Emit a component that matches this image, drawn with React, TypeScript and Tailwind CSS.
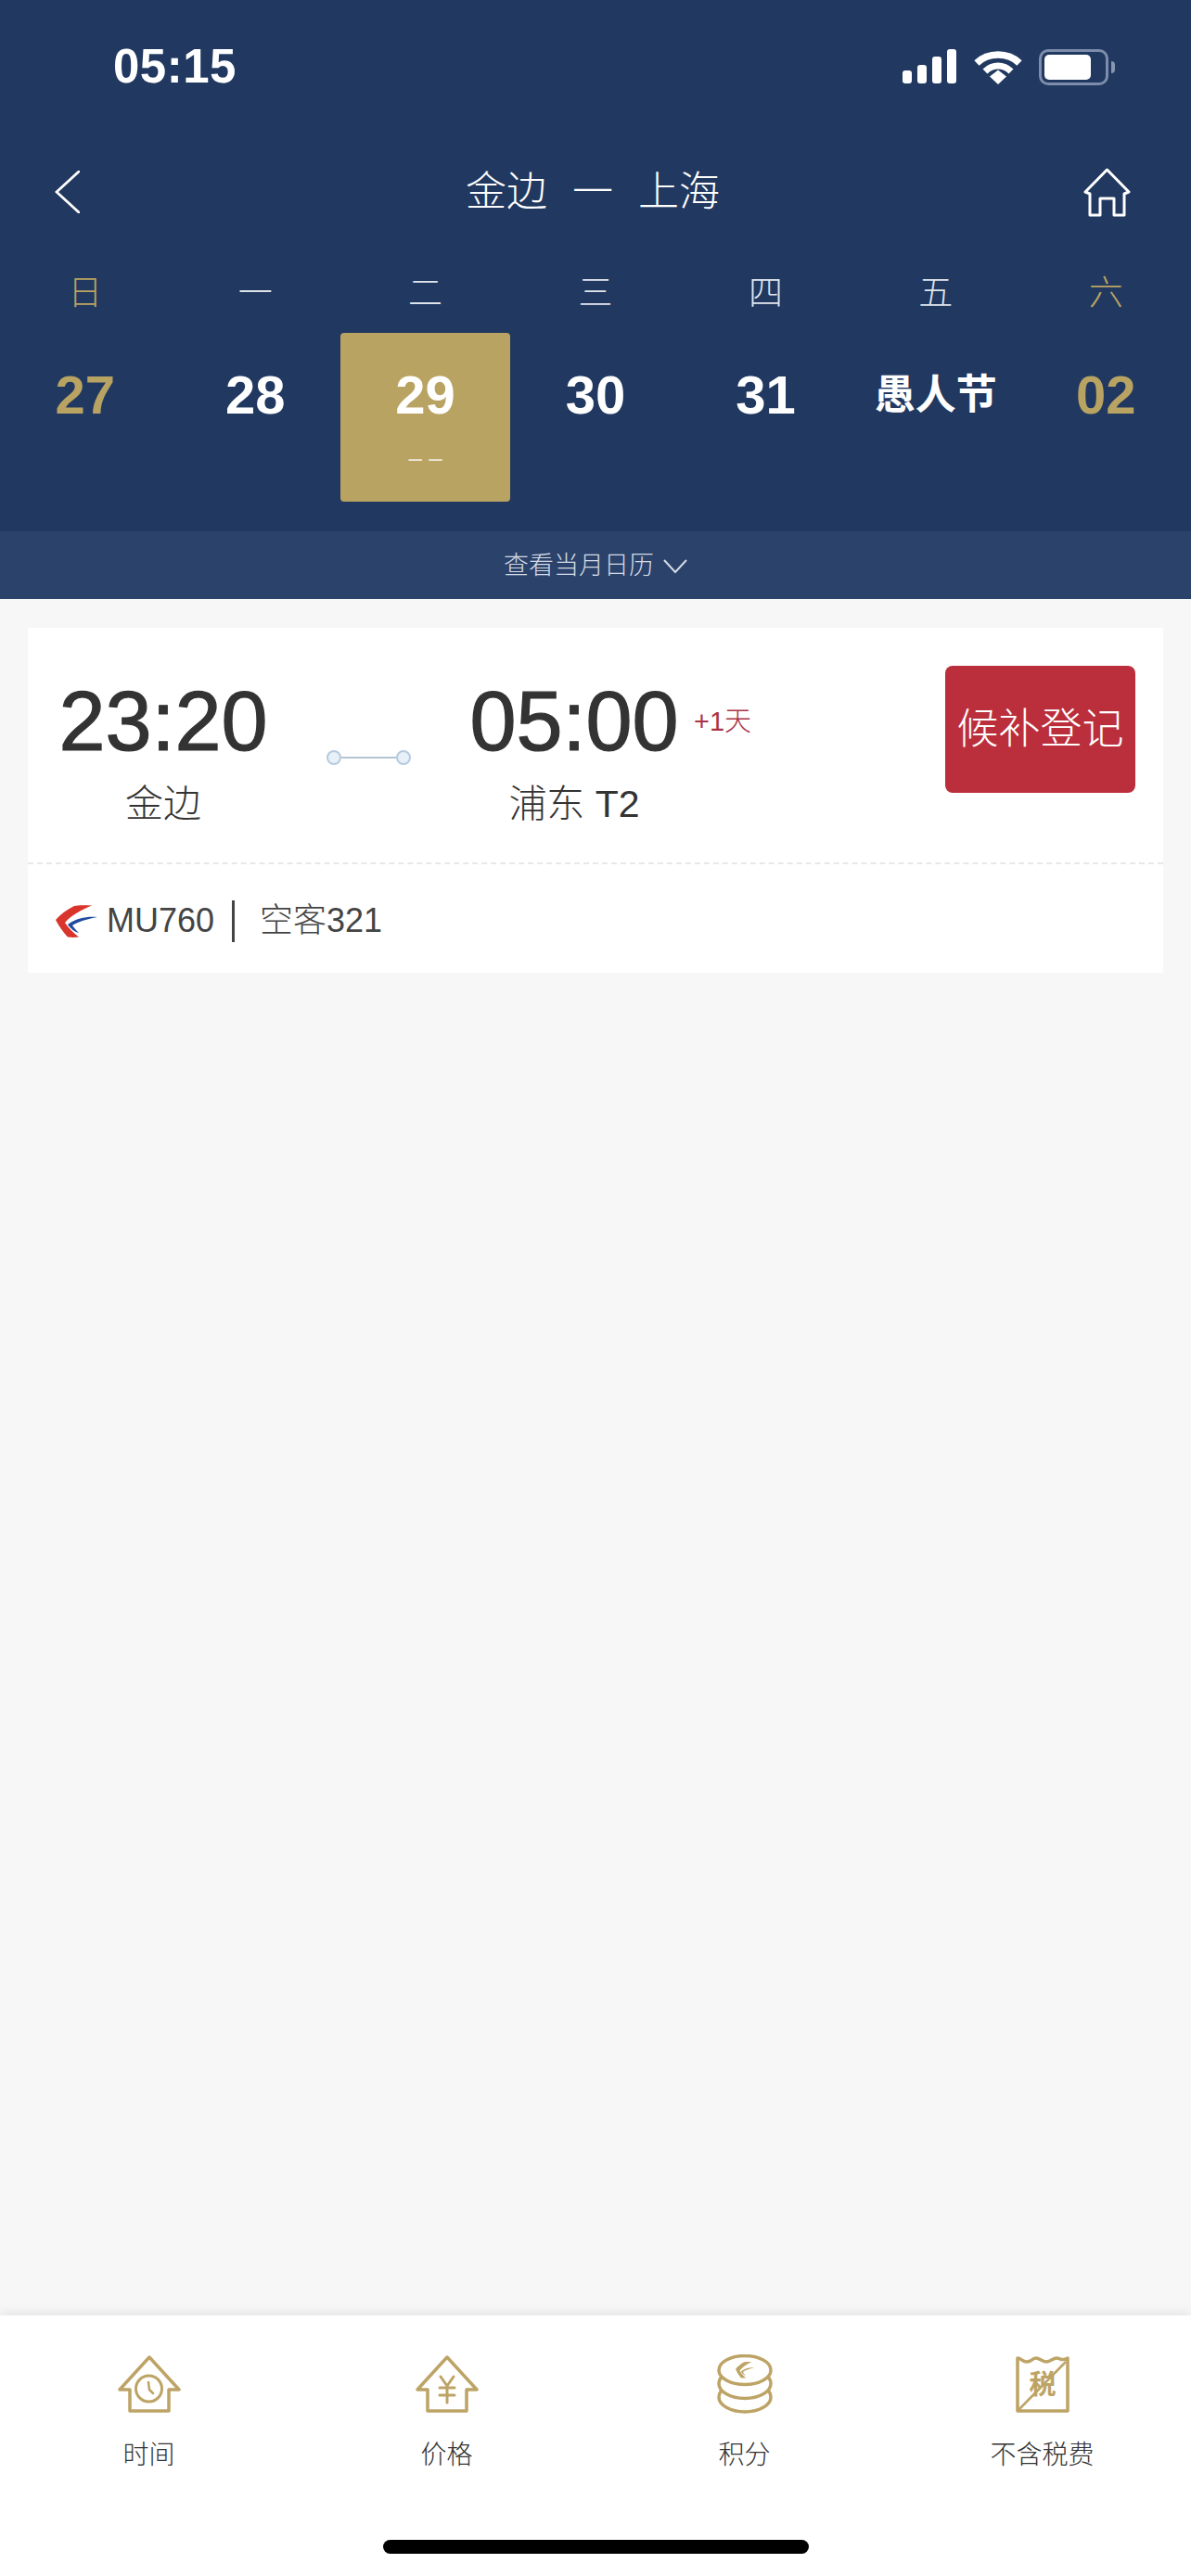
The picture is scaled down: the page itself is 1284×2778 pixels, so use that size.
const FONT = "[font-family:'Liberation_Sans','Noto_Sans_CJK_SC',sans-serif]";

const WEEK = [
  { label: "日", gold: true },
  { label: "一" },
  { label: "二" },
  { label: "三" },
  { label: "四" },
  { label: "五" },
  { label: "六", gold: true },
];

const DATES = [
  { text: "27", gold: true },
  { text: "28" },
  { text: "29", active: true },
  { text: "30" },
  { text: "31" },
  { text: "愚人节", holiday: true },
  { text: "02", gold: true },
];

function StatusIcons() {
  return (
    <div className="flex items-center">
      <svg width="60" height="38" viewBox="0 0 60 38" fill="#fff">
        <rect x="1" y="23" width="10" height="14" rx="3" />
        <rect x="17" y="17" width="10" height="20" rx="3" />
        <rect x="33" y="8" width="10" height="29" rx="3" />
        <rect x="49" y="0" width="10" height="37" rx="3" />
      </svg>
      <svg className="ml-[18px]" width="52" height="38" viewBox="0 0 52 38" fill="none" stroke="#fff">
        <path d="M3 15C15 3 37 3 49 15" strokeWidth="7.500" />
        <path d="M12 24C20 16 32 16 40 24" strokeWidth="7" />
        <path d="M17 29.500L26 22.500L35 29.500L26 38Z" fill="#fff" stroke="none" />
      </svg>
      <div className="ml-[18px] flex items-center">
        <div className="flex h-[39px] w-[75px] items-center rounded-[10px] border-[3px] border-[#7d8dab] pl-[3px]">
          <div className="h-[27px] w-[50px] rounded-[5px] bg-white" />
        </div>
        <div className="ml-[3px] h-[13px] w-[4px] rounded-r-full bg-[#8795b0]" />
      </div>
    </div>
  );
}

function HouseOutline({ children }: { children?: React.ReactNode }) {
  return (
    <svg width="68" height="62" viewBox="0 0 68 62" fill="none" stroke="#bda466" strokeWidth="3.500" strokeLinejoin="round" strokeLinecap="round">
      <path d="M34 2L66 37H55V60H13V37H2Z" />
      {children}
    </svg>
  );
}

function CoinsIcon() {
  return (
    <svg width="60" height="64" viewBox="0 0 60 64" fill="#fff" stroke="#bda466" strokeWidth="3.500">
      <ellipse cx="30" cy="46" rx="28" ry="16" />
      <ellipse cx="30" cy="31.500" rx="28" ry="16" />
      <ellipse cx="30" cy="17" rx="28" ry="15.500" />
      <g transform="translate(20 8) scale(0.44 0.5)" stroke="none" fill="#bda466">
        <path d="M39 0.500C31 0 24 0 20 1C12 5 5 10 0 16C3 22 8 29 13 34.500C17 35 21 35 25 34.500C19 30 14 25 10 19C17 11 28 5 39 0.500Z" />
        <path d="M45 13C36 12 24 13 13 21C16 25 20 29 25 30C22 27 20 25 18 22C24 18 34 15 45 13Z" />
      </g>
    </svg>
  );
}

function TaxIcon() {
  return (
    <svg width="58" height="61" viewBox="0 0 58 61" fill="none" stroke="#bda466" strokeWidth="3.500" strokeLinejoin="round">
      <path d="M2 2C6 2 7 6 12 6S18 2 22 2S28 6 33 6S40 2 44 2S50 6 56 2V59H2Z" />
      <path d="M3 58L54 6" strokeWidth="2.500" />
      <text x="29" y="41" textAnchor="middle" fontSize="29" fontWeight="700" fill="#bda466" stroke="none" fontFamily="'Noto Sans CJK SC', sans-serif">税</text>
    </svg>
  );
}

function AirlineLogo() {
  return (
    <svg width="45" height="35" viewBox="0 0 45 35">
      <path d="M39 0.500C31 0 24 0 20 1C12 5 5 10 0 16C3 22 8 29 13 34.500C17 35 21 35 25 34.500C19 30 14 25 10 19C17 11 28 5 39 0.500Z" fill="#d9352c" />
      <path d="M45 13C36 12 24 13 13 21C16 25 20 29 25 30C22 27 20 25 18 22C24 18 34 15 45 13Z" fill="#1f4aa0" />
    </svg>
  );
}

function TimeBlock({ time, place }: { time: string; place: string }) {
  return (
    <div className="flex w-[224px] shrink-0 flex-col items-center pt-[56px]">
      <div className="text-[90px] leading-[90px] text-[#333] [-webkit-text-stroke:1.2px_#333]">{time}</div>
      <div className="mt-[14px] text-[41px] leading-[60px] whitespace-nowrap text-[#333] font-light">{place}</div>
    </div>
  );
}

const TOOLS = [
  {
    label: "时间",
    icon: (
      <HouseOutline>
        <circle cx="33.500" cy="36" r="14" strokeWidth="3" />
        <path d="M33 29L34 37L38 41" strokeWidth="2.500" />
      </HouseOutline>
    ),
  },
  {
    label: "价格",
    icon: (
      <HouseOutline>
        <path d="M27 23L34 33L41 23M26 35H42M26 43H42M34 33V51" strokeWidth="3" />
      </HouseOutline>
    ),
  },
  { label: "积分", icon: <CoinsIcon /> },
  { label: "不含税费", icon: <TaxIcon /> },
];

export default function App() {
  return (
    <div className={`flex h-[2778px] w-full flex-col overflow-hidden bg-[#f7f7f7] ${FONT}`}>
      <header className="h-[573px] bg-[#213860] text-white">
        <div className="flex h-[144px] items-center justify-between pl-[122px] pr-[82px]">
          <span className="text-[51px] font-bold tracking-[0.5px]">05:15</span>
          <StatusIcons />
        </div>
        <div className="grid h-[126px] grid-cols-[1fr_auto_1fr] items-center pl-[59px] pr-[65px]">
          <svg width="27" height="46" viewBox="0 0 27 46" fill="none" stroke="#fff" strokeWidth="2.800" strokeLinecap="round">
            <path d="M26 1L2 23L26 45" />
          </svg>
          <div className="flex gap-[27px] text-[44px] font-light leading-none">
            <span>金边</span>
            <span>一</span>
            <span>上海</span>
          </div>
          <svg className="justify-self-end" width="51" height="53" viewBox="0 0 51 53" fill="none" stroke="#fff" strokeWidth="3" strokeLinejoin="round">
            <path d="M25.500 2L49 26L44 28V51H33V33H18V51H7V28L2 26Z" />
          </svg>
        </div>
        <div className="grid h-[89px] grid-cols-7 items-center pt-[5px]">
          {WEEK.map((d) => (
            <div
              key={d.label}
              className={`text-center text-[37px] font-light ${d.gold ? "text-[#b9a362]" : "text-[#dfe4ec]"}`}
            >
              {d.label}
            </div>
          ))}
        </div>
        <div className="grid h-[182px] grid-cols-7">
          {DATES.map((d) => (
            <div
              key={d.text}
              className={`flex flex-col items-center rounded-[4px] pt-[38px] ${d.active ? "bg-[#b9a362]" : ""}`}
            >
              <div className={`font-bold leading-[58px] whitespace-nowrap ${d.holiday ? "text-[44px]" : "text-[58px]"} ${d.gold ? "text-[#b9a362]" : "text-white"}`}>
                {d.text}
              </div>
              {d.active && <div className="mt-[25px] text-[26px] leading-[28px] text-[#efe9d6]">– –</div>}
            </div>
          ))}
        </div>
      </header>

      <div className="flex h-[73px] items-center justify-center gap-[10px] bg-[#2b426b] pt-[2px] text-[27px] font-light text-[#d5dbe5]">
        <span>查看当月日历</span>
        <svg width="26" height="16" viewBox="0 0 26 16" fill="none" stroke="#d5dbe5" strokeWidth="2">
          <path d="M1 1L13 14L25 1" />
        </svg>
      </div>

      <main className="flex-1 px-[30px] pt-[31px]">
        <div className="h-[372px] bg-white">
          <div className="flex h-[255px] items-start border-b-2 border-dashed border-[#e8e8e8] pl-[34px]">
            <TimeBlock time="23:20" place="金边" />
            <div className="ml-[64px] mt-[132px] flex w-[91px] shrink-0 items-center">
              <span className="h-[16px] w-[16px] rounded-full border-2 border-[#b5cbe0] bg-[#e8f0f8]" />
              <span className="h-[2px] flex-1 bg-[#b5c4d4]" />
              <span className="h-[16px] w-[16px] rounded-full border-2 border-[#b5cbe0] bg-[#e8f0f8]" />
            </div>
            <div className="ml-[64px]">
              <TimeBlock time="05:00" place="浦东 T2" />
            </div>
            <div className="ml-[17px] mt-[80px] text-[29px] leading-[42px] font-light whitespace-nowrap text-[#a93546]">+1天</div>
            <div className="ml-auto mr-[30px] mt-[41px] flex h-[137px] w-[205px] shrink-0 items-center justify-center rounded-[8px] bg-[#bb2f3c] text-[45px] font-light whitespace-nowrap text-white">
              候补登记
            </div>
          </div>
          <div className="flex h-[117px] items-center pl-[30px] pt-[5px] text-[36px] font-light text-[#444]">
            <AirlineLogo />
            <span className="ml-[10px]">MU760</span>
            <span className="ml-[19px] h-[45px] w-[3px] bg-[#444]" />
            <span className="ml-[27px] whitespace-nowrap">空客321</span>
          </div>
        </div>
      </main>

      <footer className="h-[281px] bg-white shadow-[0_-4px_10px_rgba(0,0,0,0.07)]">
        <div className="grid grid-cols-4 pt-[42px]">
          {TOOLS.map((t) => (
            <div key={t.label} className="flex flex-col items-center">
              <div className="flex h-[64px] items-center">{t.icon}</div>
              <div className="mt-[25px] text-[28px] font-light leading-[40px] text-[#333]">{t.label}</div>
            </div>
          ))}
        </div>
        <div className="mx-auto mt-[71px] h-[15px] w-[459px] rounded-full bg-black" />
      </footer>
    </div>
  );
}
